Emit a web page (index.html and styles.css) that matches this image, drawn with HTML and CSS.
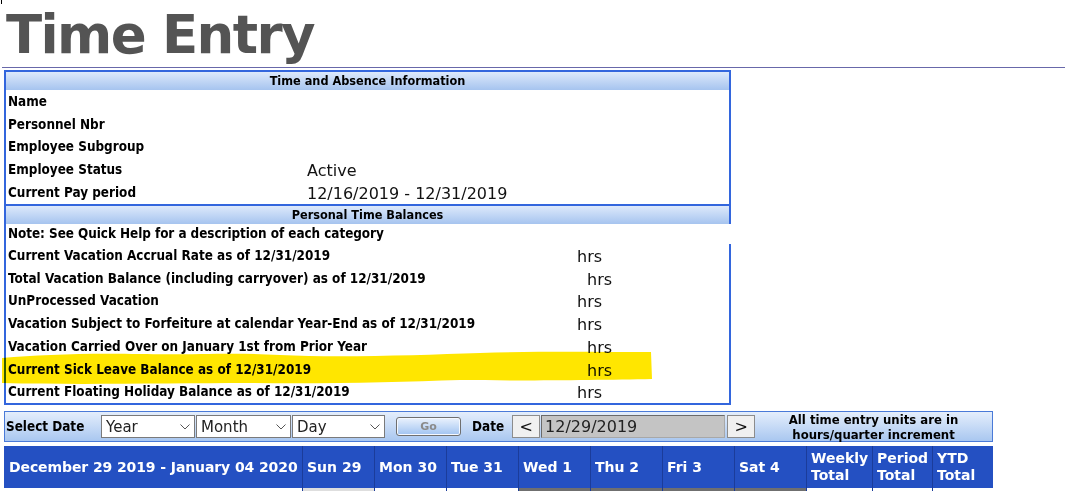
FILE: index.html
```html
<!DOCTYPE html>
<html lang="en">
<head>
<meta charset="utf-8">
<title>Time Entry</title>
<link rel="stylesheet" href="styles.css">
</head>
<body>
<div class="page">
  <div class="caret"></div>
  <h1 class="title">Time Entry</h1>
  <div class="rule"></div>

  <section class="info">
    <div class="head">Time and Absence Information</div>
    <div class="row"><span class="lbl">Name</span><span class="val"></span></div>
    <div class="row"><span class="lbl">Personnel Nbr</span><span class="val"></span></div>
    <div class="row"><span class="lbl">Employee Subgroup</span><span class="val"></span></div>
    <div class="row"><span class="lbl">Employee Status</span><span class="val">Active</span></div>
    <div class="row"><span class="lbl">Current Pay period</span><span class="val">12/16/2019 - 12/31/2019</span></div>

    <div class="head head-2">Personal Time Balances</div>
    <div class="row note"><span class="lbl">Note: See Quick Help for a description of each category</span></div>
    <div class="row bal"><span class="lbl">Current Vacation Accrual Rate as of 12/31/2019</span><span class="val">hrs</span></div>
    <div class="row bal"><span class="lbl">Total Vacation Balance (including carryover) as of 12/31/2019</span><span class="val shift">hrs</span></div>
    <div class="row bal"><span class="lbl">UnProcessed Vacation</span><span class="val">hrs</span></div>
    <div class="row bal"><span class="lbl">Vacation Subject to Forfeiture at calendar Year-End as of 12/31/2019</span><span class="val">hrs</span></div>
    <div class="row bal"><span class="lbl">Vacation Carried Over on January 1st from Prior Year</span><span class="val shift">hrs</span></div>
    <div class="row bal"><span class="lbl">Current Sick Leave Balance as of 12/31/2019</span><span class="val shift">hrs</span></div>
    <div class="row bal"><span class="lbl">Current Floating Holiday Balance as of 12/31/2019</span><span class="val">hrs</span></div>
  </section>

  <svg class="highlight" width="660" height="40" viewBox="0 0 660 40" aria-hidden="true">
    <path d="M2,9 C40,6 80,4 140,5 C200,6 230,3 280,6 C340,9 420,6 480,4 C540,2 600,3 651,3 L652,30 C600,31 520,32 460,31 C400,33 330,35 250,34 C170,34 80,36 2,34 Z" fill="#ffe600"/>
  </svg>

  <div class="datebar">
    <span class="dlabel">Select Date</span>
    <div class="selwrap w-year">
      <select class="sel"><option>Year</option></select>
      <svg class="chev" width="10" height="6" viewBox="0 0 10 6"><polyline points="0.5,0.5 5,5 9.5,0.5" fill="none" stroke="#555" stroke-width="1"/></svg>
    </div>
    <div class="selwrap w-month">
      <select class="sel"><option>Month</option></select>
      <svg class="chev" width="10" height="6" viewBox="0 0 10 6"><polyline points="0.5,0.5 5,5 9.5,0.5" fill="none" stroke="#555" stroke-width="1"/></svg>
    </div>
    <div class="selwrap w-day">
      <select class="sel"><option>Day</option></select>
      <svg class="chev" width="10" height="6" viewBox="0 0 10 6"><polyline points="0.5,0.5 5,5 9.5,0.5" fill="none" stroke="#555" stroke-width="1"/></svg>
    </div>
    <button class="go">Go</button>
    <span class="dlabel dlabel-date">Date</span>
    <button class="nav">&lt;</button>
    <input class="dateinput" type="text" value="12/29/2019">
    <button class="nav nav-next">&gt;</button>
    <div class="units">All time entry units are in<br>hours/quarter increment</div>
  </div>

  <div class="week">
    <div class="wc wc-first">December 29 2019 - January 04 2020</div>
    <div class="wc">Sun 29</div>
    <div class="wc">Mon 30</div>
    <div class="wc">Tue 31</div>
    <div class="wc">Wed 1</div>
    <div class="wc">Thu 2</div>
    <div class="wc">Fri 3</div>
    <div class="wc">Sat 4</div>
    <div class="wc">Weekly<br>Total</div>
    <div class="wc">Period<br>Total</div>
    <div class="wc">YTD<br>Total</div>
  </div>
  <div class="strip">
    <div class="sc sc-first"></div>
    <div class="sc sc-light"></div>
    <div class="sc"></div>
    <div class="sc"></div>
    <div class="sc sc-dark"></div>
    <div class="sc sc-dark"></div>
    <div class="sc sc-dark"></div>
    <div class="sc sc-dark"></div>
    <div class="sc"></div>
    <div class="sc"></div>
    <div class="sc"></div>
  </div>
</div>
</body>
</html>
```

FILE: styles.css
```css
* { box-sizing: border-box; }

body {
  margin: 0;
  background: #fff;
  font-family: "DejaVu Sans", sans-serif;
  color: #000;
}

.page {
  position: relative;
  width: 1065px;
  height: 491px;
  overflow: hidden;
  padding: 4px 0 0 4px;
}

.caret {
  position: absolute;
  left: 1px;
  top: 0;
  width: 1px;
  height: 4px;
  background: #000;
}

.title {
  margin: 0 0 0 2px;
  height: 60px;
  font: bold 53px/61px "DejaVu Sans", sans-serif;
  letter-spacing: -1.6px;
  color: #545454;
}

.rule {
  height: 1px;
  margin: 3px 0 0 -2px;
  background: #6868aa;
}

.info {
  margin-top: 2px;
  width: 727px;
  border: 2px solid #3366dd;
  border-right: 0;
}

.head {
  height: 18px;
  text-align: center;
  font: bold 12.6px/18px "DejaVu Sans Condensed", "DejaVu Sans", sans-serif;
  font-stretch: condensed;
  background: linear-gradient(#dde9fb, #a6c4ef);
  border-right: 2px solid #3366dd;
}

.head-2 {
  height: 20px;
  border-top: 2px solid #3366dd;
}

.row {
  display: flex;
  align-items: center;
  height: 22.75px;
  padding-left: 2px;
  border-right: 2px solid #3366dd;
}

.note {
  height: 20.25px;
  border-right-color: transparent;
}

.lbl {
  flex: none;
  width: 299px;
  font: bold 13.4px "DejaVu Sans Condensed", "DejaVu Sans", sans-serif;
  font-stretch: condensed;
  white-space: nowrap;
}

.bal .lbl { width: 569px; }
.note .lbl { width: auto; letter-spacing: -0.05px; }

.val {
  font: 16px "DejaVu Sans", sans-serif;
  color: #111;
  white-space: nowrap;
  position: relative;
  top: 1px;
}

.shift { padding-left: 10px; }

.highlight {
  position: absolute;
  left: 0;
  top: 349px;
  mix-blend-mode: multiply;
}

.datebar {
  margin-top: 6px;
  width: 989px;
  height: 31px;
  display: flex;
  align-items: center;
  padding-left: 1px;
  border: 1px solid #4a7ad8;
  background: linear-gradient(#e4eefc, #a9c7f0);
}

.dlabel {
  flex: none;
  width: 95px;
  font: bold 13.4px "DejaVu Sans Condensed", "DejaVu Sans", sans-serif;
  font-stretch: condensed;
}

.dlabel-date {
  width: auto;
  margin: 0 8px 0 11px;
}

.selwrap {
  position: relative;
  flex: none;
  height: 23px;
  margin-right: 1px;
}

.w-year { width: 94px; }
.w-month { width: 95px; }
.w-day { width: 93px; }

.sel {
  appearance: none;
  -webkit-appearance: none;
  display: block;
  width: 100%;
  height: 100%;
  margin: 0;
  padding: 0 0 0 4px;
  border: 1px solid #7a7a7a;
  border-radius: 0;
  background: #fff;
  font: 15px "DejaVu Sans", sans-serif;
  color: #222;
}

.chev {
  position: absolute;
  right: 5px;
  top: 9px;
  pointer-events: none;
}

.go {
  flex: none;
  margin-left: 10px;
  width: 65px;
  height: 19px;
  padding: 0;
  border: 1px solid #6f6f6f;
  border-radius: 3px;
  box-shadow: inset 0 0 0 1px #f4f8ff;
  background: linear-gradient(#eaf2fd, #a0c3f1);
  font: bold 11px "DejaVu Sans", sans-serif;
  color: #8a8a8a;
}

.nav {
  flex: none;
  width: 28px;
  height: 23px;
  padding: 0;
  border: 1px solid #8c8c8c;
  border-radius: 0;
  background: #f0f0f0;
  font: 16px "DejaVu Sans", sans-serif;
  color: #111;
}

.nav-next { margin-left: 2px; }

.dateinput {
  flex: none;
  width: 184px;
  height: 23px;
  margin: 0 0 0 1px;
  padding: 0 0 0 3px;
  border: 1px solid #a8a8a8;
  border-top-color: #6a6a6a;
  border-left-color: #6a6a6a;
  background: #c4c4c4;
  font: 16px "DejaVu Sans", sans-serif;
  color: #222;
}

.units {
  flex: 1;
  text-align: center;
  font: bold 13px/15px "DejaVu Sans Condensed", "DejaVu Sans", sans-serif;
  font-stretch: condensed;
}

.week,
.strip {
  width: 989px;
  display: grid;
  grid-template-columns: 298px repeat(7, 72px) 66px 60px 61px;
}

.week {
  margin-top: 4px;
  height: 42px;
  background: #2450c2;
}

.wc {
  display: flex;
  align-items: center;
  padding-left: 4px;
  border-left: 1px solid #1b3c9a;
  font: bold 14px/17px "DejaVu Sans", sans-serif;
  color: #fff;
  white-space: nowrap;
}

.wc-first {
  border-left: 0;
  padding-left: 5px;
  letter-spacing: -0.1px;
}

.strip { height: 10px; }

.sc {
  border-left: 1px solid #1b3c9a;
  background: #fff;
}

.sc-first { border-left: 0; }
.sc-light { background: #dedede; }
.sc-dark { background: #6f6f6f; }
```
